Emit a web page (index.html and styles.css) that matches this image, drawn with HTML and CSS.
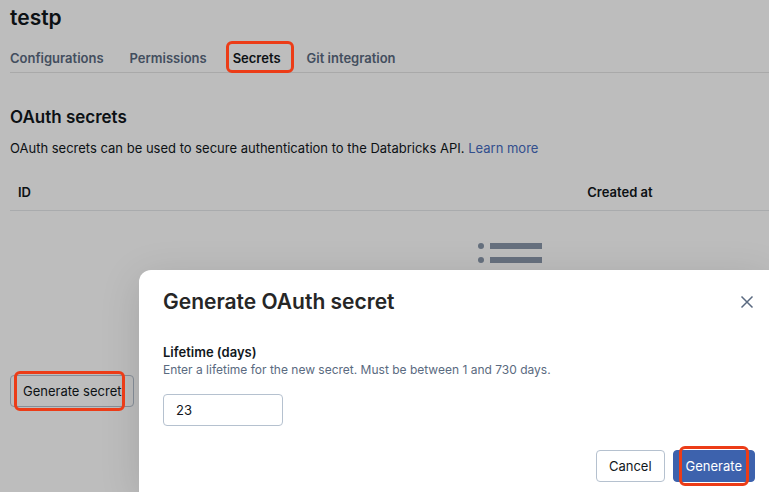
FILE: index.html
```html
<!DOCTYPE html>
<html lang="en">
<head>
    <meta charset="UTF-8">
    <meta name="viewport" content="width=device-width, initial-scale=1.0">
    <title>testp</title>

    <link rel="stylesheet" href="styles.css">
</head>
<body>

<main class="page">
    <h1>testp</h1>

    <nav class="tabs">
        <a class="tab" href="#configurations">Configurations</a>
        <a class="tab" href="#permissions">Permissions</a>
        <a class="tab active marked" href="#secrets">Secrets</a>
        <a class="tab" href="#git">Git integration</a>
    </nav>

    <h2>OAuth secrets</h2>
    <p class="intro">OAuth secrets can be used to secure authentication to the Databricks API. <a href="#learn">Learn more</a></p>

    <table class="secrets">
        <thead>
            <tr>
                <th class="col-id">ID</th>
                <th>Created at</th>
            </tr>
        </thead>
        <tbody>
            <tr>
                <td class="empty" colspan="2">
                    <svg class="empty-icon" width="64" height="64" viewBox="0 0 64 64" fill="#8a98ab" aria-hidden="true">
                        <circle cx="3" cy="11" r="3"/>
                        <rect x="12" y="8" width="52" height="6"/>
                        <circle cx="3" cy="25" r="3"/>
                        <rect x="12" y="22" width="52" height="6"/>
                        <circle cx="3" cy="39" r="3"/>
                        <rect x="12" y="36" width="52" height="6"/>
                    </svg>
                </td>
            </tr>
        </tbody>
    </table>

    <button class="btn marked" type="button">Generate secret</button>
</main>

<div class="backdrop"></div>

<form class="modal" role="dialog" aria-labelledby="modal-title">
    <header class="modal-header">
        <h2 id="modal-title">Generate OAuth secret</h2>
        <button class="close" type="button" aria-label="Close">
            <svg width="16" height="16" viewBox="0 0 16 16" fill="none" stroke="#5a6a80" stroke-width="1.5" aria-hidden="true">
                <path d="M2.5 2.5l11 11M13.5 2.5l-11 11"/>
            </svg>
        </button>
    </header>

    <div class="field">
        <label for="lifetime">Lifetime (days)</label>
        <p class="hint" id="lifetime-hint">Enter a lifetime for the new secret. Must be between 1 and 730 days.</p>
        <input type="text" inputmode="numeric" id="lifetime" value="23" aria-describedby="lifetime-hint">
    </div>

    <footer class="modal-footer">
        <button class="btn" type="button">Cancel</button>
        <button class="btn primary marked" type="submit">Generate</button>
    </footer>
</form>

</body>
</html>
```
FILE: styles.css
```css
* {
    box-sizing: border-box;
}

body {
    position: relative;
    min-height: 100vh;
    margin: 0;
    overflow: hidden;
    font-family: Inter, "Liberation Sans", sans-serif;
    font-size: 13px;
    line-height: 20px;
    color: #11171c;
    background-color: #fff;
}

h1, h2, p {
    margin: 0;
}

a {
    color: #456bbf;
    text-decoration: none;
}

.page {
    padding: 4px 0 0 10px;
}

h1 {
    font-size: 21px;
    font-weight: 600;
    line-height: 28px;
}

.tabs {
    display: flex;
    gap: 26px;
    margin-top: 12px;
    border-bottom: 1px solid #e4e4e4;
}

.tab {
    position: relative;
    padding: 4px 0;
    font-weight: 600;
    color: #5a6a80;
}

.tab.active {
    color: #11171c;
    box-shadow: inset 0 -2px #c4455a;
}

.page h2 {
    margin-top: 32px;
    font-size: 17px;
    font-weight: 600;
    line-height: 24px;
}

.intro {
    margin-top: 9px;
}

.secrets {
    width: 100%;
    margin-top: 16px;
    border-collapse: collapse;
    table-layout: fixed;
}

.secrets th {
    padding: 8px;
    font-weight: 600;
    text-align: left;
    border-bottom: 1px solid #e4e7ea;
}

.secrets .col-id {
    width: 75%;
}

.empty {
    height: 148px;
    padding: 24px 0;
    vertical-align: top;
}

.empty-icon {
    display: block;
    margin-left: 61.7%;
}

.btn {
    position: relative;
    height: 32px;
    padding: 0 12px;
    font: inherit;
    color: #11171c;
    background-color: #fff;
    border: 1px solid #b5c1cf;
    border-radius: 4px;
}

.btn.primary {
    color: #fff;
    background-color: #3d62ad;
    border-color: #3d62ad;
}

.page .btn {
    margin-top: 16px;
}

/* red outlines stay above the backdrop */
.marked::after {
    content: "";
    position: absolute;
    z-index: 3;
    inset: -5px 5px;
    border: 3px solid #ec3c17;
    border-radius: 6px;
}

.tab.marked::after {
    inset: -3px -13px -1px -7px;
}

.page .btn.marked::after {
    right: 8px;
    left: 3px;
}

.backdrop {
    position: absolute;
    z-index: 1;
    inset: 0;
    background-color: rgba(0, 0, 0, 0.26);
}

.modal {
    position: absolute;
    z-index: 2;
    top: 270px;
    right: 0;
    left: 139px;
    padding: 16px 14px 10px 24px;
    background-color: #fff;
    border-radius: 12px 0 0 0;
    box-shadow: 0 8px 40px rgba(0, 0, 0, 0.13);
}

.modal-header {
    display: flex;
    align-items: center;
    justify-content: space-between;
}

.modal-header h2 {
    font-size: 21px;
    font-weight: 600;
    line-height: 32px;
    color: #262626;
}

.close {
    display: flex;
    padding: 0;
    background: none;
    border: 0;
}

.field {
    margin-top: 24px;
}

.field label {
    display: block;
    font-weight: 600;
}

.hint {
    font-size: 12px;
    line-height: 16px;
    color: #5a6a80;
}

.field input {
    display: block;
    width: 120px;
    height: 32px;
    margin-top: 16px;
    padding: 0 12px;
    font: inherit;
    color: #11171c;
    border: 1px solid #b5c1cf;
    border-radius: 4px;
}

.modal-footer {
    display: flex;
    justify-content: flex-end;
    gap: 8px;
    margin-top: 24px;
}
```
